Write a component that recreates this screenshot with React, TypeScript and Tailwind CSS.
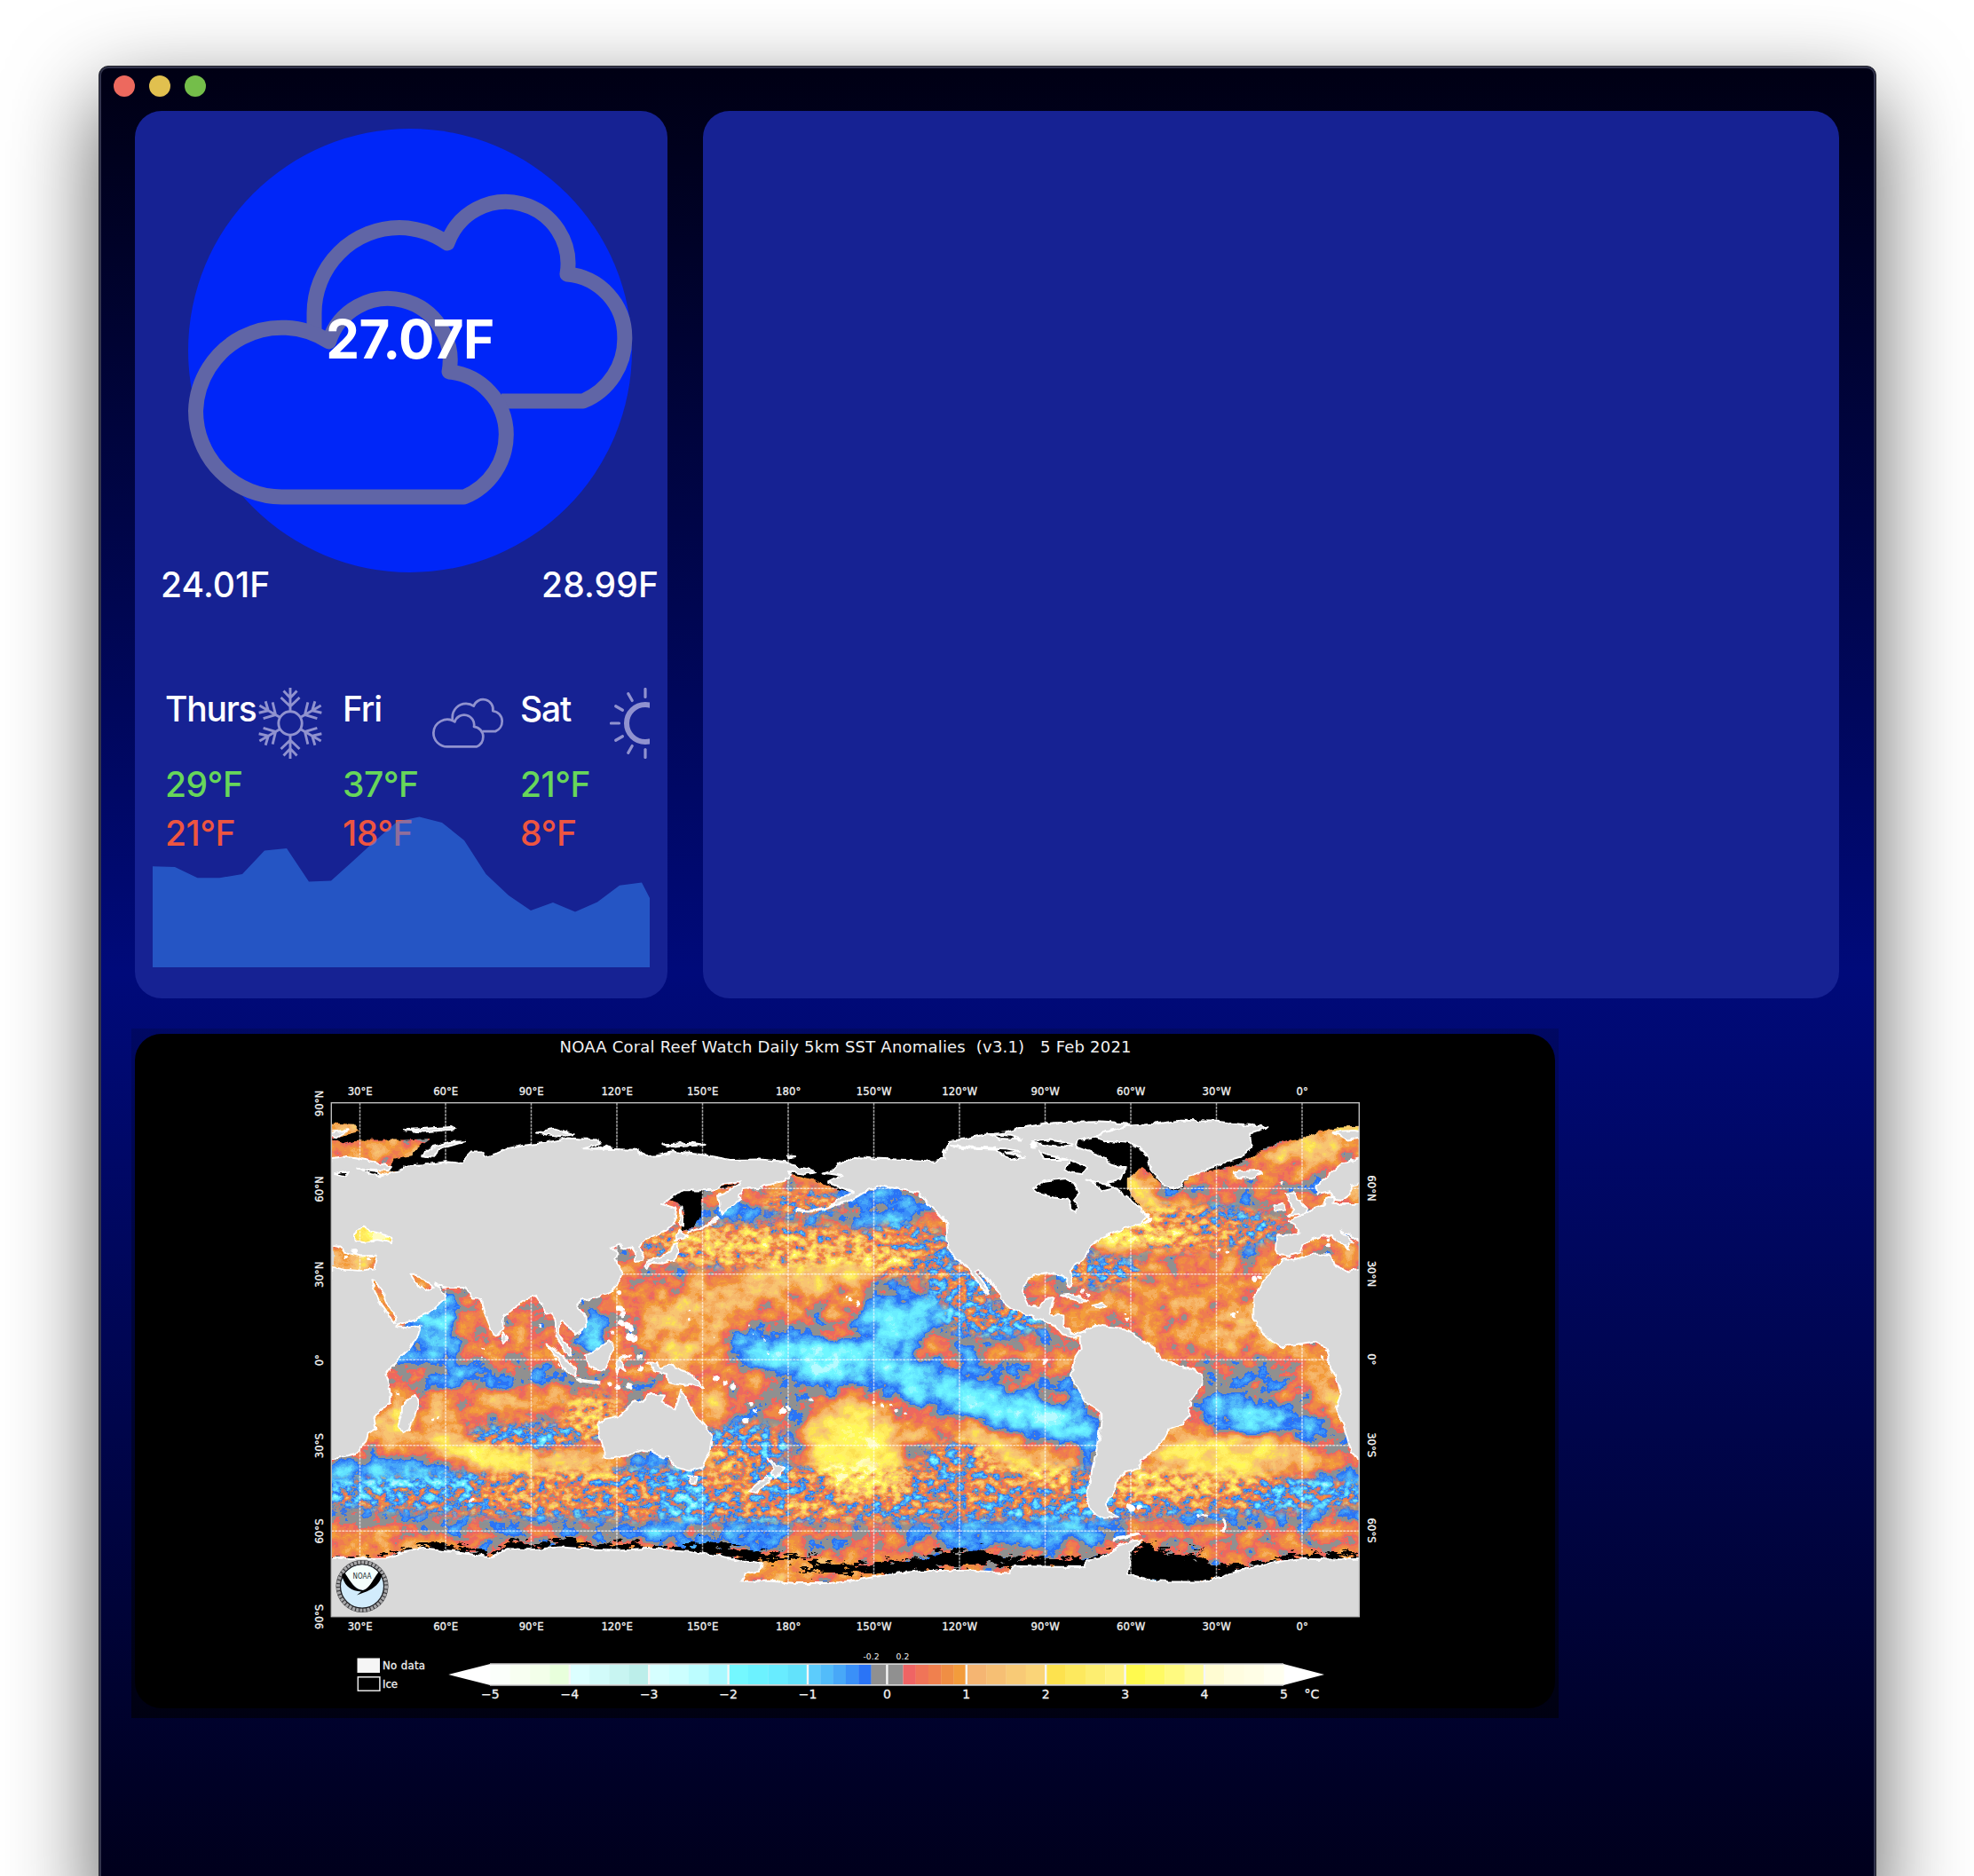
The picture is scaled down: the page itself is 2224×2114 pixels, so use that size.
import React from "react";

/* ---------- Weather icons ---------- */

function CloudsIcon({ className }: { className?: string }) {
  return (
    <svg viewBox="0 0 500 500" className={className} fill="none" stroke="currentColor" strokeWidth={17} strokeLinejoin="round" overflow="visible">
      <path d="M142 229V208A96.500 96.500 0 0 1 238 111.500A96.500 96.500 0 0 1 292 129A70 70 0 0 1 427 164A71 71 0 0 1 491.800 235A76 76 0 0 1 445 307H353" />
      <path d="M105.500 415A97 97 0 0 1 8.500 318A97 97 0 0 1 158.500 240A70 70 0 0 1 294 274A71 71 0 0 1 358.300 344A76 76 0 0 1 311 415Z" />
    </svg>
  );
}

function SnowIcon({ className }: { className?: string }) {
  return (
    <svg viewBox="-40 -40 80 80" className={className} fill="none" stroke="currentColor" strokeWidth={2.9}>
      <circle r={13.2} />
      {[0, 60, 120, 180, 240, 300].map((a) => (
        <path key={a} transform={`rotate(${a})`} d="M0 -40V-14M-7.500 -36.500L0 -28.500L7.500 -36.500M-10.500 -29L0 -19L10.500 -29" />
      ))}
    </svg>
  );
}

function SunIcon({ className }: { className?: string }) {
  return (
    <svg viewBox="-40 -40 80 80" className={className} fill="none" stroke="currentColor">
      <circle r={21} strokeWidth={6} />
      {[0, 1, 2, 3, 4, 5, 6, 7, 8, 9, 10, 11].map((i) => (
        <path key={i} transform={`rotate(${i * 30})`} d="M0 -38.500V-29.500" strokeWidth={3.2} strokeLinecap="round" />
      ))}
    </svg>
  );
}

/* ---------- Sea surface temperature map ---------- */

const PALETTE = [
  "b5fbff", "8cf8ff", "70f6ff", "6aeeff", "64e4ff", "5cd4fb", "52bcfa", "46a6f8", "3a8ff8", "2a74f6",
  "909090",
  "909090", "ee6860", "f07c50", "f08c44", "f39c3c", "f5ac5c", "f6b86c", "f8c472", "f9d068", "fde252",
  "ffea5c", "fff268", "fffa58", "fffb80", "fffdc0",
];
const channel = (i: number) =>
  PALETTE.map((c) => (parseInt(c.slice(i * 2, i * 2 + 2), 16) / 255).toFixed(3)).join(" ");
const level = (anomaly: number) => {
  const v = Math.round((((anomaly + 2.5) / 0.25 + 0.5) / PALETTE.length) * 255);
  return `rgb(${v},${v},${v})`;
};

/* lon, lat, rx, ry, rotation, anomaly */
const FIELD: number[][] = [
  [200, -52, 200, 8, 0, 0.2], [200, -64, 200, 6, 0, 0.5],
  [58, 17, 8, 9, 0, -0.9], [51, 5, 9, 10, 0, -0.7], [59, 4, 5, 12, 0, -1.3], [71, 9, 8, 14, 0, 0.8], [88, 12, 9, 9, 0, 0.7],
  [78, -5, 40, 3.5, -4, 0], [67, -6, 18, 4, 0, -0.5], [104, -8, 14, 4, -10, -0.2],
  [80, -15, 40, 6, 0, 1.1], [112, -20, 9, 8, 0, 1.7], [42, -24, 9, 7, 0, 2.1], [55, -25, 12, 5, 0, 1.5],
  [90, -28, 24, 4.5, -6, -0.5], [80, -34, 27, 4, -9, 3], [108, -36, 16, 6, 0, 1.8], [70, -42, 14, 4, 0, 1],
  [43, -42, 30, 7, -4, -1], [62, -51, 44, 5, 0, -0.1], [90, -48, 18, 6, 0, 1], [50, -55, 40, 4, 0, 0],
  [34, -65, 28, 4, 0, 1.1], [98, -57, 40, 5, 0, 0], [134, -40, 14, 9, 0, -0.3], [122, -49, 16, 6, 0, 0.5],
  [145, -50, 8, 8, 0, -1], [155, -61, 40, 3.5, 0, -0.6], [163, -42, 14, 10, 0, 0.6], [155, -36, 7, 6, 0, 1.5],
  [163, -27, 14, 6, 0, -0.1], [176, -37, 6, 14, 0, -0.1], [150, -16, 10, 7, 0, 1.3], [160, -6, 14, 6, -25, 0.9],
  [165, 50, 22, 5, 8, -0.8], [182, 57, 20, 6, 0, 0.9], [212, 53, 15, 8, 0, -0.6], [190, 49, 14, 5, 0, 0.1],
  [163, 41, 28, 6, 0, 1.9], [195, 38, 24, 8, 8, 1.3], [193, 31, 32, 6, 6, 2.2], [150, 31, 12, 4, 0, 0.6],
  [158, 19, 30, 9, 8, 1.6], [190, 19, 28, 6, 8, 0.9], [134, 12, 7, 12, 0, 1.6], [143, 3, 10, 5, 0, 2.2],
  [130, 27, 8, 5, 0, 0.5], [122, 34, 6, 6, 0, 0.8],
  [111, 9, 5, 7, 0, -1.3], [114, 18, 5, 4, 0, 0], [120, 20, 5, 5, 0, 1],
  [237, 34, 8, 10, -30, -0.1], [228, 44, 8, 6, 0, 0.4], [242, 25, 10, 8, 0, 0.1], [220, 26, 14, 5, 0, 0.1],
  [178, 10, 20, 4, 5, 0.1], [185, 2, 24, 6, 0, -1.6], [204, -1, 26, 8, 0, -1.9], [222, 14, 18, 8, 0, -1.5],
  [240, 10, 12, 5, 0, 0], [255, 13, 16, 6, 0, 0.1], [262, 8, 16, 5, 0, -0.6], [252, 5, 12, 3, 0, 0.1],
  [228, -10, 34, 5, -13, -1.2], [250, -16, 34, 6, -17, -1.8], [268, -20, 17, 6, -22, -1.9], [281, -14, 4, 9, 20, -0.9],
  [250, -4, 28, 4.5, -8, 0.1], [240, 2, 24, 2.5, 0, -0.5],
  [230, 3, 8, 1.8, 0, 1.5], [253, 3, 7, 1.8, 0, 1.5], [218, 2.500, 4, 1.5, 0, 1.1], [270, 2, 12, 2.5, -8, 1.2], [276, -1, 4, 4, 0, 1.5],
  [190, -13, 24, 4, -8, 0.1], [178, -13, 14, 6, 0, 0.1], [216, -18, 14, 3, -15, 0.2],
  [230, -27, 22, 6, -14, 1], [203, -29, 16, 16, -10, 2.5], [208, -41, 15, 8, 0, 2.2], [203, -32, 11, 12, 0, 3.2],
  [260, -34, 22, 6, -26, 2.1], [236, -40, 9, 12, 0, 0], [250, -47, 22, 6, 0, 0.5], [268, -52, 22, 4, -5, 0],
  [262, -61, 38, 5, 0, -0.8], [280, -56, 14, 5, 0, -0.7], [283, -40, 3, 12, 0, 0.1], [287, -28, 4, 8, 0, -0.3],
  [215, -66, 12, 4, 0, 0.8], [184, -73, 20, 5, 0, 1.3], [200, -62, 24, 3, 0, 0.4], [190, -52, 14, 4, 0, 1.2],
  [266, 24, 4, 5, 0, 0.4], [271, 27, 2, 5, 0, 1.8], [276, 27, 3, 4, 0, -0.9], [284, 14, 16, 6, 0, 1.1],
  [330, 30, 40, 26, 0, 0.9], [300, 43, 14, 3.5, 14, 4], [310, 45, 12, 6, 0, 2.2], [303, 58, 5, 10, 25, 2.1],
  [292, 33, 9, 7, 0, 0], [318, 51, 12, 6, 0, 1.3], [334, 53, 10, 3, 10, -0.5], [346, 46, 10, 9, 0, 0.2],
  [325, 18, 22, 8, 0, 1.1], [338, 10, 16, 6, 15, 1.7], [344, 6, 20, 3, 0, 1.3], [342, -5, 18, 6, 0, 0], [358, -5, 12, 5, 0, 0.6],
  [346, -7, 9, 3, 0, -0.2], [333, -15, 8, 5, 0, -0.5], [344, -21, 20, 6, -8, -1.4], [364, -24, 12, 5, 0, -0.5],
  [370, -11, 5, 14, 15, 1.8], [335, -34, 27, 8, 0, 2.7], [318, -25, 6, 6, 0, 1.5], [360, -37, 14, 5, 0, 1.8],
  [309, -43, 15, 8, 0, 1.9], [328, -45, 15, 5, 0, 1.6], [362, -46, 22, 7, 10, -0.5], [312, -53, 22, 4, 0, 0],
  [345, -55, 26, 5, 0, -0.1], [348, -65, 34, 5, 0, 0.8], [308, -60, 9, 5, 0, 0.8],
  [362, 73, 22, 6, 20, 2], [352, 66, 12, 3, 0, 0.5], [366, 62, 3, 4, 0, -0.9], [345, 60, 12, 5, 0, 0.7], [362, 56, 4, 4, 0, 0.9],
  [36, 73, 24, 5, 0, 1.3], [26, 82, 10, 2, 0, 2.4], [34, 43.500, 9, 4, 0, 3.8], [24, 34, 14, 6, 0, 1.5], [367, 40, 14, 6, 0, 0.9],
  [39, 20, 8, 12, 0, 1.2], [51, 27, 5, 4, 0, 1.2], [378, 60, 3, 6, 0, 2.2],
];

/* Regions where eddies dominate: lon, lat, rx, ry */
const EDDIES: number[][] = [
  [200, -47, 200, 10], [170, 40, 45, 8], [220, 38, 18, 10], [320, 46, 34, 8], [290, 31, 14, 6],
  [90, -27, 22, 5], [165, -30, 16, 8], [252, 14, 18, 6], [240, -38, 14, 10], [112, -20, 12, 8], [185, 55, 14, 5], [240, 26, 12, 8],
];

const EURASIA =
  "M20 70.500L24 71.200L30 70.300L36 69.200L41 67.500L40 66.200L34 66.700L38 64.500L44 66L46 68L54 68.500L60 69.300L66 68.800L67 71L69 73L73 73L74 71L78 72.300L82 74L87 75L95 76L103 77.600L113 77L114 75.500L108 74L116 73.800L127 73.500L130 71.200L134 71.500L140 72.800L150 71.800L160 70L170 70.200L178 69.500L184 67.500L190 66L186 65L180 66L181 64.500L178 62.500L172 61L170 60L164 60L163 58L163 56L160 53.500L157 51L156 54L155.500 57.500L158 58.500L163 61.500L163.500 62.500L157 61.500L154 59.500L148 59.300L143 59.400L138 56L135.500 54.500L141 53L140.500 50L140 48L137 45.500L133 43L130.500 42.500L127.500 39.800L129.500 36.500L129 35L126.500 34.500L126.500 37.500L125 39.600L121.500 39L121.500 40.800L118 39L120.500 37.300L119.300 35L122 31L121 28L118 24L113 22L110 21L108 21.500L105.800 19L109 15L109.200 11.500L106.500 9.500L105 8.700L105 10.500L102.500 12L101 13.400L99.500 11L99.500 9L101 6.800L103.400 4.200L104 1.400L102 2.500L100.300 6L98.400 8.500L98.600 13L97.500 16.500L94.500 16L94 19L91.800 22.500L89 21.800L86.800 20.500L82.300 16.600L80.200 15L80 11L78 8.200L76.500 9L74.500 14L72.800 19L72.500 21L69.500 21L68 24L66.500 25.200L61 25.200L57 26L56 27L59.800 22.500L58 19.500L55 17L49 14.200L45 12.900L43.300 12.500L43 11.500L47 11.200L51.200 12L50.500 8.500L47.500 4L44 0.500L41 -2.500L39 -5.500L40.500 -10.500L40.500 -15L37 -18L35 -20.500L35.500 -24L32.800 -26L32 -29L28.500 -32.800L24 -34L20 -34.900Z";
const INLAND_SEAS =
  "M28 42L28 44L31 46.500L34 45L38 44L41.500 42.500L41 41L36 42L32 41.200ZM20 40L23 40L24 38L27 37L30 36.300L36 36.500L35 32L30 31.200L25 31.500L20 32.500ZM34 28L35.500 27.500L38 23.500L40 19L43 14.500L42.500 13L40 15.500L37 20L35.500 23.500ZM48 30L50 30L52 28L55 26.500L56 25L53 24L50.800 25.500Z";
const AMERICAS =
  "M192 65.500L196 66.500L198 68.500L203 71L210 70.500L222 70L232 69.500L235 70.500L234.300 72L236.800 76.600L243 77.500L248.500 78.800L256 79.500L263 81.500L273 83L288 83.300L299.500 82.500L296 81L292.700 80.300L286.600 78L281.600 77L281 74.500L289 71.500L293.300 68.300L298.600 66.800L297 65L296.400 63L292 62L296 59L300 56L304 52.500L305.500 50.500L303 47.500L299 46.500L294 44.500L289.600 42.500L285.500 39.500L284 36L280 32.800L278.800 31L279.800 26.500L278.500 25.300L277.400 28L276 29.800L271 30.200L265.700 29.500L262.600 26.500L262.300 22.500L264 19L268 18.500L270 21.300L273.200 21.500L271.800 18L271.600 16L276.500 15.500L276.500 11.500L280.400 9L284 10L287.800 12.200L298.500 10.800L301.500 8.600L306 5.500L309 3.500L310.500 0.500L316 -2L322 -3.500L325 -6L325 -8.500L321 -14.300L320.400 -20L318 -22.500L313.600 -24.100L311.500 -28L308 -32L303.800 -35L303 -38L298.200 -39.200L295.500 -41.500L294 -46.400L291.500 -50L292 -53L296 -55L290 -55.500L286 -53L284.500 -49L285.500 -44L286.600 -37.600L288.500 -30L289.600 -22L289.500 -18.500L284 -14.500L281 -9L278.800 -5.500L280 -2.500L280.500 1L282.500 4L282 8L279 8L276 9L273.500 12L268.500 14L263 16L258 18.200L254.500 21L254 24L250 28L246.500 31.500L245.500 31L248.500 27L250.200 23L247.500 25.500L245 29L242.500 33L239 34.800L236.200 39L235.700 43L235.500 48L232 51.500L229 54.500L225.500 58.500L220 60L213 61L208 59.500L204 57L199.500 55L195 54L199 57L203 58.500L199 60L194 62L199 64.500Z";
const GREENLAND =
  "M287.200 78L290.300 79.500L299.500 82L308 82.500L317.300 83.800L330 83.500L338.200 82.500L348 81.500L342 79.500L342.500 75L338.800 70.800L331 68.500L324 65.500L320.400 64.500L316.700 59.900L311.800 61L307 66.500L306 71L303 74.500L299 76L292 76.500Z";
const OLD_WORLD_EAST =
  "M384 70.600L380 70.600L374 68.500L368 63.500L364.600 61L365.500 58.200L369.500 59L371.500 56L374 55.800L377 58L377 61L384 63ZM384 54.500L371 54.500L371 57.500L368.500 56.500L367.500 54L363 52.500L359 50L355 48.700L357.900 47L358.700 44L351 43.500L350.700 38.500L351.500 37L355 36.200L359 37.500L360.500 40L363.500 42.500L367 43.500L370.500 43.300L373.500 41L376.500 38.500L376 40.500L378.300 41L374 44.500L373.500 45.500L380 41.500L384 41ZM384 31.500L380 31.500L376 31L371 33.500L370 37L363 36.800L357 35L353.600 35.500L350 31.500L346.800 28L343 22L343 14.500L346 9.500L350 6L353 4.600L359 5.500L364 6.300L368.500 4.300L369.500 1L369 -1.500L372 -6L373.600 -12L372 -17L374.500 -23L376.500 -30L378 -33.500L380 -34.900L384 -34.900Z";
const ISLANDS =
  "M113.600 -22L116 -20.800L121 -19.500L123.500 -17.200L126.500 -14L129.500 -14.800L131 -12L136.800 -12.200L135.700 -15L140.700 -17.500L141.800 -13L142.500 -10.700L145 -15L147.500 -19.500L151 -23.500L153.300 -26.500L152.500 -32.500L150 -37.500L146 -39L143.500 -38.600L140 -37.500L138 -34L136 -34.700L132.500 -32L129 -31.700L124 -33.500L119 -34.500L115.500 -34.500L115.500 -31L113.700 -26Z" +
  "M144.700 -40.700L148.300 -41L147.500 -43.500L146 -43.500ZM172.700 -34.500L175 -36.500L178.500 -37.800L177 -39.700L175.300 -41.500L173.500 -39.500L175 -38ZM172.700 -40.700L174 -41.700L171 -44.500L169 -46.700L166.500 -46Z" +
  "M49.300 -12L50.400 -15.500L47.500 -24.500L45 -25.500L43.500 -23L44.300 -20L44.500 -16.500ZM80 9.500L81.800 7.500L80.500 6L79.800 7.500Z" +
  "M95.300 5.500L99 3L103 -1L106 -3.500L105.500 -6L102 -4L98.500 1.500ZM109 1.500L111.500 2.500L115 5L117.500 6.500L119 5L117.500 1L116 -3.500L112 -3.300L110 -2ZM105.500 -6.500L114 -7.500L114 -8.500L107 -7.500Z" +
  "M131 -1L134 -1L135 -3L138 -1.700L144 -4L147.500 -6.500L150.500 -10.500L146 -8.500L143 -9L138 -8L137.500 -5L133 -4ZM120 -5L119.500 -1L121 1L125 1.500L121 0L123 -4L121 -2.500Z" +
  "M130.500 31.500L131.500 34L136 33.700L140 35L141.500 38L141.200 41L140 40.500L139 38L136.500 36.500L131 34.700L129.800 33ZM140.300 42L145 43.500L141.800 45.300ZM142.500 54L143 50L143 46.500L142 48Z" +
  "M335.500 65.500L338 66L345 66.300L346 65L342 63.500L338 63.800ZM354.500 58L357 58.500L358.500 56L361.500 53L361 51L355 50.300L357 52L356 54.500ZM350.500 54L353.500 55L354 52.500L350.500 51.800Z" +
  "M52 71.500L56 71L57 73.500L67 76.500L62 76.300L55 74.500ZM18 79.500L26 80.500L22 78ZM371 80L378 80.300L383 79.500L380 77.500L376 77ZM92 79.500L98 81L105 79L100 78ZM136 75.500L146 76L151 75.300L140 74.500ZM180 71.500L182 71.200L180.500 70.800ZM45 80.500L62 81.500L64 80.800L52 79.800Z" +
  "M275.500 22.500L280 23L285.500 20.500L282 20.300ZM286.500 19L290 20L291.500 18.700L288 18Z";
const ANTARCTICA =
  "M16 -69.500L30 -69.500L39 -69.500L45 -67.500L51.500 -66.200L59 -67L68 -68L76 -69L82 -66.200L90 -66.500L100 -65.700L110 -66.300L120 -66.600L132 -66.100L145 -67L154.700 -68.700L163 -70.500L170.700 -71.500L170 -74L165 -75L163.500 -77.500L174 -77.600L182 -78.200L195 -78.300L202 -77.500L208 -76.500L216 -75L226 -74L240 -73.800L250 -74.500L257 -75L259 -72.300L270 -72.500L284 -72.700L284.500 -70L291.500 -69L295 -65.500L300 -63.500L304 -63.200L299.500 -67.500L300 -71L298.900 -75L306 -77L313.600 -77.800L324.700 -77.800L332 -76L340.700 -73L350 -71L359 -69.700L370 -70L384 -69.700L384 -94L16 -94Z";

const ARCTIC_ICE =
  "M16 94L16 83L28 82.500L30 80L20 77.500L24 75.500L30 77L45 77L55 77.500L50 74L48 71.500L42 70.500L40 66L60 66L120 70L185 66.500L180 65L190 62.500L196 60L203 58.500L206 62L240 66L262 60L280 52L286 56L300 53.500L303 54L299 60L299 63.500L304 67.500L306 66L312 60.500L317 59L321 65L335 67.500L345 72.500L350 75.500L360 77.500L366 80L373 81.700L384 82L384 94Z";
const OKHOTSK_ICE = "M137 56.500L142 60L158 59.800L164 62L158 61L150 59L149.500 50L147 46.500L142.500 45L143 48L144 52L141 55Z";
const HUDSON_BAY =
  "M265.700 60L269.400 62.600L277.500 63.500L280 62L282 58.500L280 56L281.500 54L280.500 51.500L279 53.500L278 56L273 56.800L268 58ZM277 67L279 70L281 69L285 67.500L283 65L279 65.500ZM284 63L292 61.500L294 60L290 59L288 61.500ZM237 75L244 74.500L256 74L261 73L256 72.500L263 71L258 70L253 73.500L243 74ZM265 76.500L272 77L280 75.500L277 74.500L268 75.500ZM268 73L272 71.500L278 70L270 70ZM250 79L258 78.500L262 77L254 77.500ZM29 67L36 66L38 64.500L34 65ZM21 65L26 66L25 64ZM112 74L118 74.300L116 74.800Z";
const ANTARCTIC_ICE =
  "M16 -69L39 -69L50 -65.500L60 -64.500L76 -68L84 -63L92 -65L104 -62.500L112 -65.500L120 -63.800L130 -65.500L145 -65.500L152 -63.500L165 -66.500L173 -68L192 -68.800L173 -70.500L165 -71L150 -69L76 -70L40 -71L16 -70ZM183 -74.500L190 -71L202 -72L214 -70.500L226 -70L234 -66.700L250 -67L256 -69L270 -69.500L284 -70L300 -66L306 -64.500L318 -69L326 -65.500L322 -69L330 -72L346 -71L356 -68.500L368 -67.700L384 -69L384 -70.500L358 -70.500L334 -77L325 -79L310 -79L298 -76L284 -73L262 -74L250 -71.500L226 -74L210 -76L206 -75L195 -74.500Z";

const SPECKS: number[][] = [
  [121, 18, 1.6], [122, 16, 1.4], [121.500, 13, 1.2], [123.500, 12, 1.6], [125, 11, 1.3], [124.500, 8, 1.8], [126, 7, 1.2], [118.500, 9.500, 0.8],
  [120.800, 23.500, 1], [128, 1, 1.3], [128.500, -3.200, 1.2], [117.500, -8.600, 1], [120.500, -9.500, 1.2], [124.500, -9, 1.4], [155, -6.500, 1.2], [158, -8, 1], [160.500, -9.500, 1.1],
  [167, -15.500, 1], [168.500, -18, 0.8], [165, -21.500, 1.4], [178, -17.800, 1.4], [180, -17, 0.8], [204.500, 19.700, 1], [202, 21, 0.7], [200.500, 22, 0.6],
  [210, -15, 0.8], [213, -16, 0.8], [216, -16, 0.7], [218, -17.500, 0.7], [221, -19, 0.7], [188, -14, 0.7], [270, -0.500, 1.2], [300, -51.700, 1.6], [303, -51.700, 1.2],
  [69, -49, 1], [55.500, -21, 0.6], [57.500, -20.300, 0.6], [43, -12, 0.7], [93, 12, 0.6], [73, 4, 0.5], [73, 1, 0.5], [283, 24, 1], [285, 22.500, 0.8], [298, 16, 0.8], [298.800, 14, 0.8],
  [331, 38.500, 0.7], [334, 37.700, 0.7], [343.500, 28.300, 1], [345, 28.500, 0.8], [336, 15.500, 1], [337, 17, 0.6], [367, 1, 0.6], [368.500, 3.500, 0.7], [353, 62, 0.7],
  [173, 2, 0.5], [172, 7, 0.4], [168, 9, 0.4], [166, 12, 0.4], [154, 8, 0.4], [145, 14, 0.5], [145.500, 17, 0.4], [369, 42, 0.9], [369, 40, 1.1], [324, -54.500, 1], [266, 75, 1.4],
  [28, 38, 1.2], [25, 36, 1], [33, 35.200, 0.8], [98.500, 0, 0.5], [99.500, -2, 0.6],
];

const LON_LABELS = ["30°E", "60°E", "90°E", "120°E", "150°E", "180°", "150°W", "120°W", "90°W", "60°W", "30°W", "0°"];
const LAT_LABELS = ["90°N", "60°N", "30°N", "0°", "30°S", "60°S", "90°S"];

const SCALE_BAR: string[][] = [
  ["#fbfffb", "#f8fff2", "#f3ffea", "#e8ffdc"],
  ["#dcffff", "#d2fbfa", "#c8f5f2", "#bceeea"],
  ["#d6ffff", "#ccffff", "#bcfdff", "#a8f9ff"],
  ["#74f8ff", "#6cf2ff", "#68ecff", "#62e2fb"],
  ["#5cccfc", "#52bcfa", "#48a8f8", "#3a90f8", "#2a74f6"],
  ["#ef6464", "#f07458", "#f0804e", "#f08e44", "#f39c3c"],
  ["#f5b572", "#f6bf74", "#f8ca76", "#fad478"],
  ["#fde24e", "#fde95e", "#fdee70", "#fff280"],
  ["#fffa4e", "#fffa64", "#fffa80", "#fffb9c"],
  ["#fffcd2", "#fffde0", "#fffee6", "#fffff0"],
];
/* start and end of each coloured run, in degrees */
const RUNS = [[-5, -4], [-4, -3], [-3, -2], [-2, -1], [-1, -0.2], [0.2, 1], [1, 2], [2, 3], [3, 4], [4, 5]];

const GEO = "scale(3.2167 -3.2167) translate(-20 -90)";
const STEP = 89.4;
const ZERO = 847.4;

function OceanField() {
  return (
    <>
      <rect x={-10} y={-110} width={420} height={220} fill={level(0.6)} />
      {FIELD.map(([lon, lat, rx, ry, rot, a], i) => (
        <ellipse key={i} rx={rx} ry={ry} transform={`translate(${lon} ${lat}) rotate(${rot})`} fill={level(a)} />
      ))}
    </>
  );
}

function OceanFilter({ id, amp, freq, seed, blur }: { id: string; amp: number; freq: string; seed: number; blur: number }) {
  return (
    <filter id={id} filterUnits="userSpaceOnUse" x={-40} y={-40} width={1240} height={660} colorInterpolationFilters="sRGB">
      <feGaussianBlur in="SourceGraphic" stdDeviation={blur} result="base" />
      <feTurbulence type="fractalNoise" baseFrequency={freq} numOctaves={5} seed={seed} />
      <feColorMatrix values="1 0 0 0 0  1 0 0 0 0  1 0 0 0 0  0 0 0 0 1" result="noise" />
      <feComposite in="base" in2="noise" operator="arithmetic" k1={0} k2={1} k3={amp} k4={-amp / 2} />
      <feComponentTransfer>
        <feFuncR type="discrete" tableValues={channel(0)} />
        <feFuncG type="discrete" tableValues={channel(1)} />
        <feFuncB type="discrete" tableValues={channel(2)} />
      </feComponentTransfer>
      <feGaussianBlur stdDeviation={0.4} />
    </filter>
  );
}

function NoaaLogo() {
  return (
    <g transform="translate(256 622.500)">
      <circle r={29.500} fill="#3a3a3c" />
      <circle r={27} fill="none" stroke="#a8a8aa" strokeWidth={4} strokeDasharray="3 1.200" />
      <circle r={24.500} fill="#d2ecfc" stroke="#202024" strokeWidth={1.200} />
      <path d="M-19.500 -14A24 24 0 0 1 19.500 -14C13 -4 7 4 1 4C-6 4 -13 -4 -19.500 -14Z" fill="#f4fffc" />
      <path d="M-23 -13L-19.500 -15C-13 -5 -8 4 1 4.500C8 3 13 -9 18.500 -16L22.500 -13C20 -2 11 4 2 7L-6 10L-1 6C-13 5 -20 0 -23 -13Z" fill="#000" />
      <text y={-9} textAnchor="middle" fontSize={9} fill="#1a2a30" textLength={21} lengthAdjust="spacingAndGlyphs">NOAA</text>
    </g>
  );
}

function AnomalyMap() {
  return (
    <svg viewBox="0 0 1600 760" width={1600} height={760} className="block" fontFamily="'DejaVu Sans', sans-serif" fill="#f2f2f2">
      <defs>
        <OceanFilter id="calm" amp={0.5} freq="0.045 0.055" seed={4} blur={7} />
        <OceanFilter id="eddy" amp={0.95} freq="0.095 0.120" seed={11} blur={7} />
        <filter id="coast" filterUnits="userSpaceOnUse" x={-20} y={-20} width={1200} height={620} colorInterpolationFilters="sRGB">
          <feTurbulence type="fractalNoise" baseFrequency="0.120" numOctaves={2} seed={7} />
          <feDisplacementMap in="SourceGraphic" scale={6} xChannelSelector="R" yChannelSelector="G" />
        </filter>
        <filter id="floe" filterUnits="userSpaceOnUse" x={-20} y={-20} width={1200} height={620} colorInterpolationFilters="sRGB">
          <feTurbulence type="fractalNoise" baseFrequency="0.080 0.200" numOctaves={4} seed={2} />
          <feDisplacementMap in="SourceGraphic" scale={22} xChannelSelector="R" yChannelSelector="G" />
        </filter>
        <filter id="soft" filterUnits="userSpaceOnUse" x={-40} y={-40} width={1240} height={660}>
          <feGaussianBlur stdDeviation={5} />
        </filter>
        <mask id="eddyMask" maskUnits="userSpaceOnUse" x={0} y={0} width={1158} height={579}>
          <g filter="url(#soft)">
            <g transform={GEO}>
              {EDDIES.map(([lon, lat, rx, ry], i) => (
                <ellipse key={i} cx={lon} cy={lat} rx={rx} ry={ry} fill="#fff" />
              ))}
            </g>
          </g>
        </mask>
        <clipPath id="frame">
          <rect width={1158} height={579} />
        </clipPath>
      </defs>

      <rect width={1600} height={760} fill="#000" />
      <text x={800.500} y={20.500} textAnchor="middle" fontSize={18} textLength={644} style={{ whiteSpace: "pre" }}>
        {"NOAA Coral Reef Watch Daily 5km SST Anomalies  (v3.1)   5 Feb 2021"}
      </text>

      <g transform="translate(221.300 77.700)">
        <g clipPath="url(#frame)">
          <g filter="url(#calm)"><g transform={GEO}><OceanField /></g></g>
          <g mask="url(#eddyMask)"><g filter="url(#eddy)"><g transform={GEO}><OceanField /></g></g></g>
          <g filter="url(#floe)">
            <g transform={GEO} fill="#000">
              <path d={ANTARCTIC_ICE} />
            </g>
          </g>
          <g filter="url(#coast)">
            <g transform={GEO} fill="#000">
              <path d={ARCTIC_ICE} />
              <path d={OKHOTSK_ICE} />
            </g>
          </g>
          <g stroke="#fff" strokeOpacity={0.65} strokeWidth={1.500} strokeDasharray="3 1">
            {LON_LABELS.map((_, i) => (
              <path key={i} d={`M${32.200 + i * 96.500} 0V579`} />
            ))}
            {[1, 2, 3, 4, 5].map((i) => (
              <path key={i} d={`M0 ${i * 96.500}H1158`} />
            ))}
          </g>
          <g filter="url(#coast)">
            <g transform={GEO} fill="#d9d9d9" stroke="#fff" strokeWidth={0.600} strokeLinejoin="round">
              <path d={EURASIA + INLAND_SEAS} fillRule="evenodd" />
              <path d={AMERICAS} />
              <path d={GREENLAND} />
              <path d={OLD_WORLD_EAST} />
              <path d={ISLANDS} />
              <path d={ANTARCTICA} />
              <path d={HUDSON_BAY} fill="#000" />
              <path d="M183 52.500Q190 51 197 54.500M145 44.500L150 46L156 50M304 47.500L307 49L305 51M325 -54L327 -55M332 -56Q334 -58 332 -60M294 -63L303 -61" fill="none" strokeWidth={1} />
            </g>
            <g transform={GEO} fill="#fff">
              {SPECKS.map(([lon, lat, r], i) => (
                <circle key={i} cx={lon} cy={lat} r={r * 0.800} />
              ))}
            </g>
            {/* fills the sliver that the coast filter leaves at the map's west edge */}
            <path d="M-8 67V183H3V67ZM-8 202V400H3V202Z" fill="#d9d9d9" />
          </g>
        </g>
        <rect width={1158} height={579} fill="none" stroke="#bdbdbd" strokeWidth={1.400} />
      </g>

      <g fontSize={11.700} textAnchor="middle" stroke="#f2f2f2" strokeWidth={0.300}>
        {LON_LABELS.map((t, i) => (
          <g key={t}>
            <text x={253.700 + i * 96.500} y={69.300}>{t}</text>
            <text x={253.700 + i * 96.500} y={671.700}>{t}</text>
          </g>
        ))}
        {LAT_LABELS.map((t, i) => (
          <text key={t} transform={`translate(211.500 ${78.500 + i * 96.400}) rotate(-90)`}>{t}</text>
        ))}
        {LAT_LABELS.slice(1, 6).map((t, i) => (
          <text key={t} transform={`translate(1388.800 ${174 + i * 96.400}) rotate(90)`}>{t}</text>
        ))}
      </g>
      <NoaaLogo />

      <rect x={250.500} y={703.500} width={25.500} height={16.500} fill="#f5f5f5" />
      <rect x={251.300} y={724.800} width={24.600} height={15.400} fill="#000" stroke="#e8e8e8" strokeWidth={1.500} />
      <g fontSize={11.700} stroke="#f2f2f2" strokeWidth={0.300}>
        <text x={279} y={716.300} textLength={48}>No data</text>
        <text x={279} y={736.800}>Ice</text>
      </g>

      <path d="M353.300 722L400.400 710H1294L1340 722L1294 734H400.400Z" fill="#fff" />
      {RUNS.map(([a, b], i) =>
        SCALE_BAR[i].map((c, j, all) => {
          const w = ((b - a) * STEP) / all.length;
          return <rect key={`${i}-${j}`} x={ZERO + a * STEP + j * w} y={711} width={w + 0.300} height={22} fill={c} />;
        })
      )}
      <rect x={ZERO - 0.200 * STEP} y={711} width={0.400 * STEP} height={22} fill="#909090" />
      {[-4, -3, -2, -1, 0, 1, 2, 3, 4].map((n) => (
        <rect key={n} x={ZERO + n * STEP - 1.200} y={710} width={2.400} height={24} fill="#f6f6f6" />
      ))}
      <path d="M400 710H1294M400 734H1294" stroke="#c8c8c8" strokeWidth={1.400} />
      <g fontSize={14} textAnchor="middle" stroke="#f2f2f2" strokeWidth={0.300}>
        {[-5, -4, -3, -2, -1, 0, 1, 2, 3, 4, 5].map((n) => (
          <text key={n} x={ZERO + n * STEP} y={749.300}>{n < 0 ? `−${-n}` : n}</text>
        ))}
        <text x={1326} y={749.300}>°C</text>
      </g>
      <g fontSize={9.300} textAnchor="middle">
        <text x={829.500} y={704.500}>-0.2</text>
        <text x={865} y={704.500}>0.2</text>
      </g>
    </svg>
  );
}

/* ---------- Weather card ---------- */

const FORECAST = [
  { day: "Thurs", high: "29°F", low: "21°F", Icon: SnowIcon },
  { day: "Fri", high: "37°F", low: "18°F", Icon: CloudsIcon },
  { day: "Sat", high: "21°F", low: "8°F", Icon: SunIcon },
];

function WeatherCard() {
  return (
    <section className="h-[1000px] w-[600px] shrink-0 overflow-hidden rounded-[30px] bg-[#162293] pt-5 text-white">
      <div className="relative ml-[60px] grid size-[500px] place-items-center rounded-full bg-[#0026f8]">
        <CloudsIcon className="absolute inset-0 size-full text-[#6065a6]" />
        <span className="relative mb-[27px] text-[60px] leading-none font-bold tracking-[-0.600px]">27.07F</span>
      </div>
      <div className="flex justify-between pr-[10px] pl-[29px] text-[39px] leading-[28px] font-[450] tracking-[0.100px]">
        <span>24.01F</span>
        <span>28.99F</span>
      </div>
      <div className="relative mx-5 mt-[102px] h-[315px] overflow-hidden">
        <div className="flex w-[600px]">
          {FORECAST.map(({ day, high, low, Icon }) => (
            <div key={day} className="w-[200px] pr-[5px] pl-[14px] text-[39px] leading-[55px] font-[450] tracking-[-0.500px] whitespace-nowrap">
              <div className="flex h-20 justify-between tracking-[-1.200px]">
                <span className="w-[101px] leading-[48px]">{day}</span>
                <Icon className="size-20 shrink-0 text-[#9092cf]" />
              </div>
              <p className="mt-px text-[#67d65a]">{high}</p>
              <p className="text-[#ee5540]">{low}</p>
            </div>
          ))}
        </div>
        <svg viewBox="0 0 560 170" className="absolute bottom-0 left-0 h-[170px] w-[560px]">
          <path
            d="M0 56.300L25 57L50.500 69.300H75.500L101 65L126 38.500L151 36L176 73.500L201 72.500L226 50L251 27L276 5.500L300.500 0.500L326 7L351 27L375.500 65L401 89L426 106L451 97L476 107.500L501 96.500L526 77.700L551 74.500L560 92V170H0Z"
            fill="rgb(53,136,243)"
            fillOpacity={0.51}
          />
        </svg>
      </div>
    </section>
  );
}

export default function App() {
  return (
    <div className="h-[2114px] w-[2224px] overflow-hidden bg-white px-[111px] pt-[74px] font-[Inter,sans-serif]">
      <main className="h-[2080px] w-[2003px] rounded-[11px] border border-[#26272f] bg-[#000018] shadow-[0_36px_100px_rgba(0,0,0,0.64)]">
        <div className="h-full rounded-[10px] border-2 border-[#32344c] bg-[linear-gradient(to_bottom,#000014_0px,#000a7a_1020px,#00001c_2040px)]">
          <div className="flex h-12 gap-4 pt-2 pl-[14px]">
            <i className="size-6 rounded-full bg-[#ed695e]" />
            <i className="size-6 rounded-full bg-[#e1c04f]" />
            <i className="size-6 rounded-full bg-[#74be4a]" />
          </div>
          <div className="flex gap-10 pr-[39px] pl-[38px]">
            <WeatherCard />
            <section className="h-[1000px] flex-1 rounded-[30px] bg-[#162293]" />
          </div>
          <div className="mt-[34px] ml-[34px] w-[1608px] bg-gradient-to-b from-black/15 to-black/60 px-1 pt-[6px] pb-[11px]">
            <div className="overflow-hidden rounded-[30px]">
              <AnomalyMap />
            </div>
          </div>
        </div>
      </main>
    </div>
  );
}
